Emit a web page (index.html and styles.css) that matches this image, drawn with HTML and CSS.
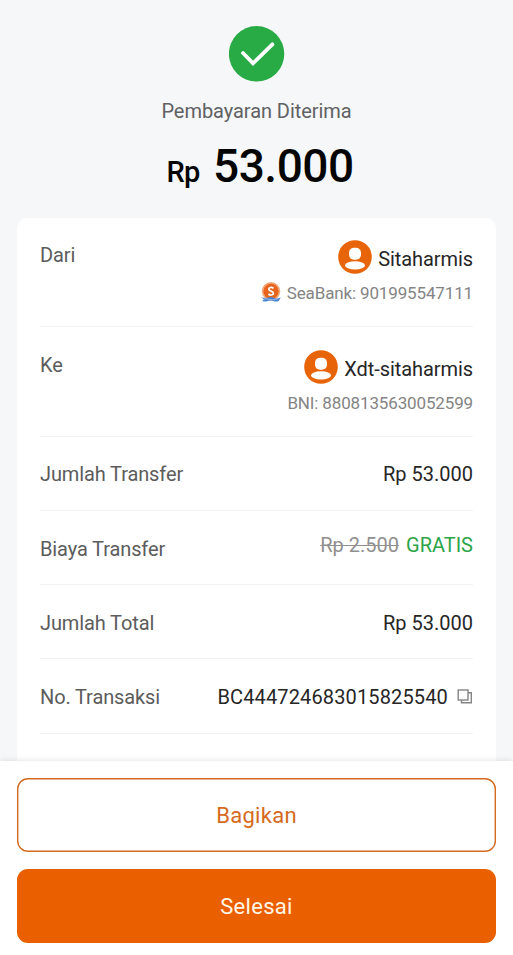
FILE: index.html
```html
<!DOCTYPE html>
<html lang="id">
<head>
<meta charset="utf-8">
<title>Pembayaran Diterima</title>
<link rel="stylesheet" href="styles.css">
</head>
<body>
<div class="screen">
  <main class="content">
    <header class="summary">
      <svg class="check" viewBox="0 0 56 56" aria-hidden="true">
        <circle cx="27.6" cy="27.8" r="27.7" fill="#28aa44"/>
        <path d="M14 27 24 37.400 43.400 18.300" fill="none" stroke="#fff" stroke-width="3.800" stroke-linecap="round" stroke-linejoin="miter"/>
      </svg>
      <p class="status">Pembayaran Diterima</p>
      <h1 class="amount"><span class="currency">Rp</span><span class="total">53.000</span></h1>
    </header>
    <section class="card">
      <div class="row party">
        <span class="label">Dari</span>
        <div class="person">
          <div class="name-line">
            <svg class="avatar" viewBox="0 0 34 34" aria-hidden="true"><circle cx="17" cy="17" r="16.8" fill="#e86408"/><rect x="11" y="7.8" width="12" height="12" rx="5" fill="#fff"/><ellipse cx="17" cy="25.4" rx="10" ry="4.2" fill="#fff"/></svg>
            <span class="name">Sitaharmis</span>
          </div>
          <div class="bank-line">
            <svg class="bank-logo" viewBox="0 0 20 20" aria-hidden="true">
              <circle cx="10" cy="9.3" r="9.2" fill="#f0a878"/>
              <circle cx="10" cy="9.3" r="7.6" fill="#e8641c"/>
              <path d="M12.5 6.400C10.800 4.800 7.800 5.300 7.800 7.200c0 2.200 4.600 1.600 4.600 4 0 2.200-3.300 2.300-5 .8" fill="none" stroke="#fff" stroke-width="1.700"/>
              <path d="M.3 15.200q4 1.300 7 .3t6 .4 6.500-.7l-2 3.800q-3 1-5.500 0t-5.500 0-5.500 0l1.500-1.500Z" fill="#4d86cf"/>
              <path d="M2 17.300q3-1.200 6 0t8-.2" fill="none" stroke="#d7e7fa" stroke-width=".5"/>
            </svg>
            <span class="account">SeaBank: 901995547111</span>
          </div>
        </div>
      </div>
      <div class="row party second">
        <span class="label">Ke</span>
        <div class="person">
          <div class="name-line">
            <svg class="avatar" viewBox="0 0 34 34" aria-hidden="true"><circle cx="17" cy="17" r="16.8" fill="#e86408"/><rect x="11" y="7.8" width="12" height="12" rx="5" fill="#fff"/><ellipse cx="17" cy="25.4" rx="10" ry="4.2" fill="#fff"/></svg>
            <span class="name">Xdt-sitaharmis</span>
          </div>
          <div class="bank-line"><span class="account">BNI: 8808135630052599</span></div>
        </div>
      </div>
      <div class="row"><span class="label">Jumlah Transfer</span><span class="value">Rp 53.000</span></div>
      <div class="row"><span class="label">Biaya Transfer</span><span class="value fee"><s>Rp 2.500</s><span class="free">GRATIS</span></span></div>
      <div class="row"><span class="label">Jumlah Total</span><span class="value">Rp 53.000</span></div>
      <div class="row"><span class="label">No. Transaksi</span><span class="value transaction"><span class="code">BC444724683015825540</span>
        <svg class="copy" viewBox="0 0 16 16" fill="none" stroke="#858585" stroke-width="1.400" aria-hidden="true"><rect x="1.200" y="1" width="9.800" height="10"/><path d="M11 3.700h3.300v10H4.500v-2.700"/></svg></span></div>
    </section>
  </main>
  <footer class="actions">
    <button class="button outline" type="button">Bagikan</button>
    <button class="button primary" type="button">Selesai</button>
  </footer>
</div>
</body>
</html>
```

FILE: styles.css
```css
* { box-sizing: border-box; }
body {
  margin: 0;
  background: #f6f7f9;
  color: #262626;
  font-family: Roboto, "Liberation Sans", sans-serif;
  font-size: 20px;
  line-height: 24px;
}
.screen { height: 955px; display: flex; flex-direction: column; overflow: hidden; }
.content { height: 761px; flex: none; padding: 26px 17px 0; overflow: hidden; display: flex; flex-direction: column; }
.summary { height: 192px; flex: none; display: flex; flex-direction: column; align-items: center; }
.check { width: 56px; height: 56px; flex: none; }
.status { margin: 17px 0 0; color: #606163; letter-spacing: -.06px; }
.amount {
  margin: 16px 0 0 7px;
  display: flex;
  align-items: baseline;
  gap: 13.500px;
  color: #050505;
  font-weight: 500;
  line-height: 54px;
}
.currency { font-size: 29px; letter-spacing: -.7px; }
.total { font-size: 46px; letter-spacing: -.5px; }
.card { flex: 1 0 auto; padding: 0 23px 60px; border-radius: 10px; background: #fff; }
.row {
  height: 74.2px;
  display: flex;
  align-items: center;
  justify-content: space-between;
  padding-top: 2px;
  border-bottom: 1px solid #f2f2f2;
}
.row.party { height: 109.4px; align-items: flex-start; padding-top: 22px; }
.row.second { padding-top: 22.8px; }
.party .label { margin-top: 3px; }
.label { color: #5c5c5c; letter-spacing: -.12px; }
.person { display: flex; flex-direction: column; align-items: flex-end; }
.name-line { display: flex; align-items: center; gap: 6px; height: 34px; }
.name { letter-spacing: -.07px; margin-top: 3px; }
.avatar { width: 34px; height: 34px; }
.bank-line { display: flex; align-items: center; gap: 6px; height: 24px; margin-top: 7px; }
.bank-logo { width: 20px; height: 20px; margin-bottom: 3px; }
.account { color: #848484; font-size: 17px; letter-spacing: -.14px; }
.fee { display: flex; gap: 7px; padding-bottom: 8px; }
.fee s { color: #909090; text-decoration-thickness: 1px; }
.free { color: #2ba549; }
.transaction { display: flex; align-items: center; gap: 9px; }
.code { letter-spacing: .14px; }
.copy { width: 16px; height: 16px; }
.actions {
  flex: 1;
  display: flex;
  flex-direction: column;
  gap: 17px;
  padding: 17px;
  background: #fff;
  box-shadow: 0 0 6px rgba(0, 0, 0, .13);
}
.button {
  height: 74px;
  flex: none;
  border: 0;
  border-radius: 11px;
  padding: 1px 0 0;
  font: 400 22px/26px Roboto, "Liberation Sans", sans-serif;
  letter-spacing: .3px;
}
.outline { box-shadow: inset 0 0 0 1.400px #d46b20; background: #fff; color: #d66a20; }
.primary { background: #ea6000; color: #fff5e5; }
```
